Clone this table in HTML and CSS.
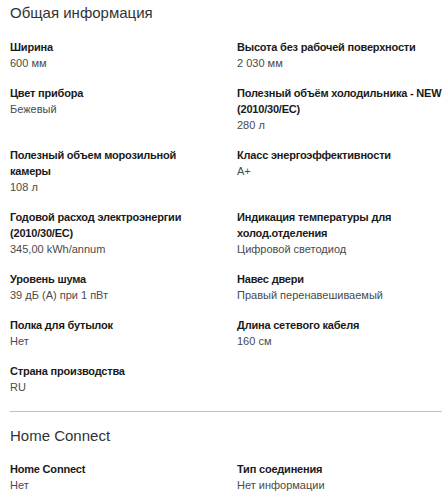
FILE: index.html
```html
<!DOCTYPE html>
<html lang="ru">
<head>
<meta charset="utf-8">
<link rel="stylesheet" href="styles.css">
</head>
<body>
<div class="page">
  <section class="section">
    <h2 class="section-title">Общая информация</h2>
    <div class="grid">
      <div class="item"><div class="label">Ширина</div><div class="value">600 мм</div></div>
      <div class="item"><div class="label">Высота без рабочей поверхности</div><div class="value">2 030 мм</div></div>
      <div class="item"><div class="label">Цвет прибора</div><div class="value">Бежевый</div></div>
      <div class="item"><div class="label">Полезный объём холодильника - NEW (2010/30/EC)</div><div class="value">280 л</div></div>
      <div class="item"><div class="label">Полезный объем морозильной камеры</div><div class="value">108 л</div></div>
      <div class="item"><div class="label">Класс энергоэффективности</div><div class="value">A+</div></div>
      <div class="item"><div class="label">Годовой расход электроэнергии (2010/30/EC)</div><div class="value">345,00 kWh/annum</div></div>
      <div class="item"><div class="label">Индикация температуры для холод.отделения</div><div class="value">Цифровой светодиод</div></div>
      <div class="item"><div class="label">Уровень шума</div><div class="value">39 дБ (А) при 1 пВт</div></div>
      <div class="item"><div class="label">Навес двери</div><div class="value">Правый перенавешиваемый</div></div>
      <div class="item"><div class="label">Полка для бутылок</div><div class="value">Нет</div></div>
      <div class="item"><div class="label">Длина сетевого кабеля</div><div class="value">160 см</div></div>
      <div class="item"><div class="label">Страна производства</div><div class="value">RU</div></div>
    </div>
  </section>
  <section class="section section-bordered">
    <h2 class="section-title">Home Connect</h2>
    <div class="grid grid-tight">
      <div class="item"><div class="label">Home Connect</div><div class="value">Нет</div></div>
      <div class="item"><div class="label">Тип соединения</div><div class="value">Нет информации</div></div>
    </div>
  </section>
</div>
</body>
</html>
```
FILE: styles.css
```css
html, body {
  margin: 0;
  padding: 0;
  background: #fff;
}
.page {
  padding: 3px 1px 0 10px;
  font-family: "Liberation Sans", Arial, sans-serif;
  color: #222;
}
.section-title {
  margin: 0;
  font-size: 15px;
  line-height: 20px;
  font-weight: normal;
  color: #333;
}
.grid {
  display: grid;
  grid-template-columns: 1fr 1fr;
  column-gap: 22px;
  row-gap: 14px;
  margin-top: 16px;
}
.grid-tight {
  margin-top: 15px;
}
.label {
  font-size: 11px;
  line-height: 16px;
  font-weight: bold;
  letter-spacing: -0.2px;
  color: #1a1a1a;
}
.value {
  font-size: 11px;
  line-height: 16px;
  color: #4a4a4a;
}
.section-bordered {
  margin-top: 16px;
  border-top: 1px solid #c0c0c0;
  padding-top: 14px;
}
```
